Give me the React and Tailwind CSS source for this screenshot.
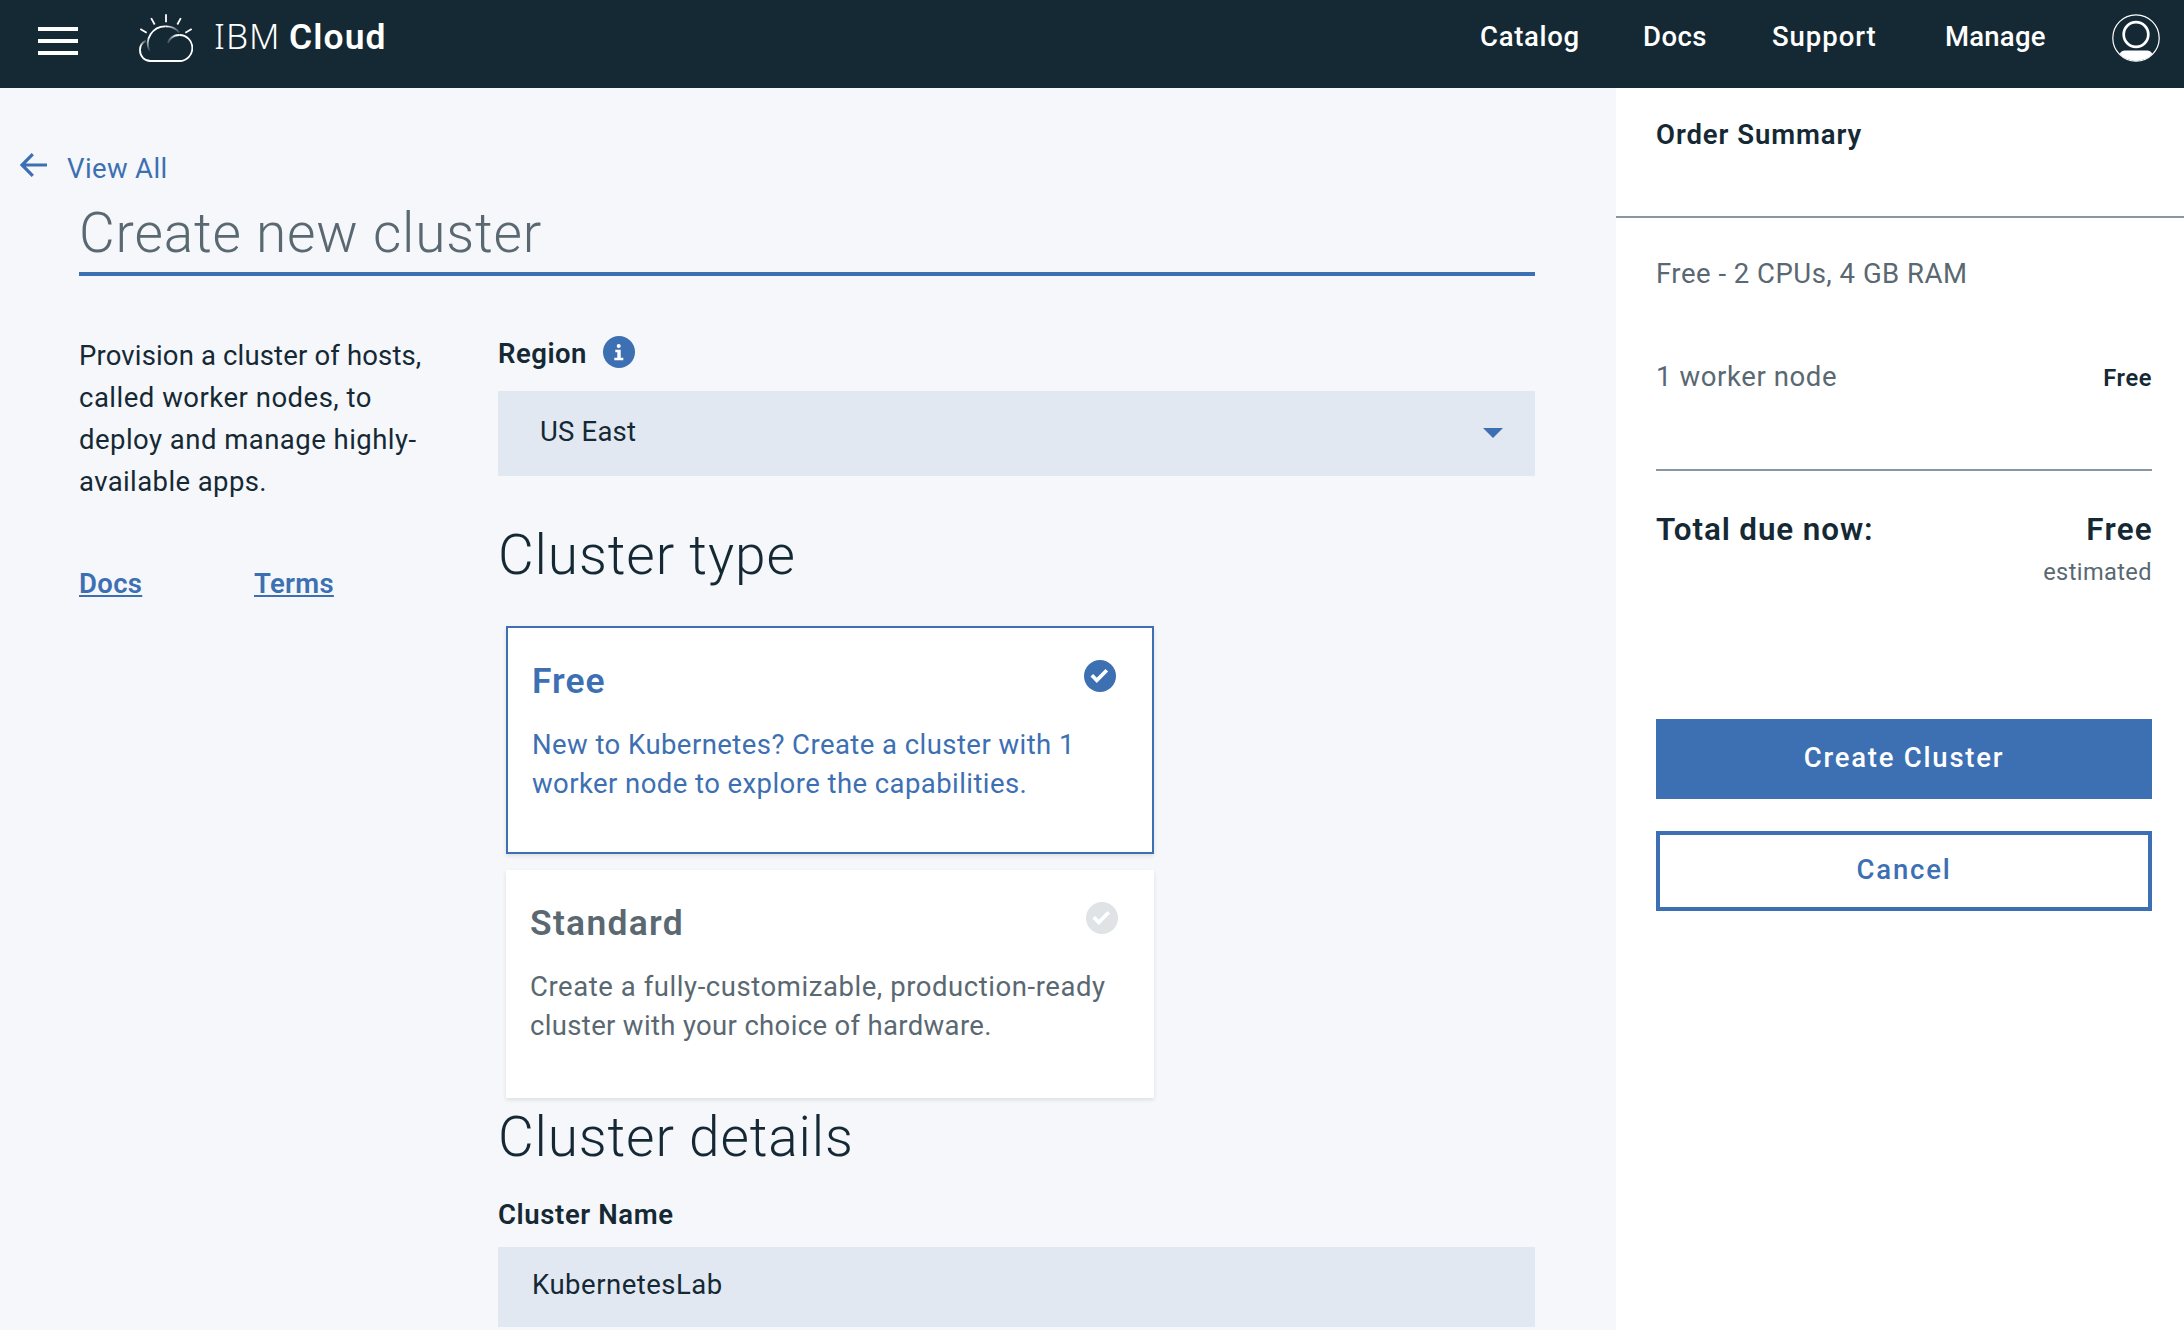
function CloudLogo() {
  return (
    <svg className="h-12 w-[54px] shrink-0" viewBox="417 42 162 144" fill="none" stroke="#fff" strokeWidth="5.4">
      <defs>
        <linearGradient id="sunLeft" gradientUnits="userSpaceOnUse" x1="0" y1="156" x2="0" y2="112">
          <stop offset="0" stopColor="#fff" stopOpacity="0" />
          <stop offset="1" stopColor="#fff" />
        </linearGradient>
        <linearGradient id="sunRight" gradientUnits="userSpaceOnUse" x1="500" y1="0" x2="540" y2="0">
          <stop offset="0" stopColor="#fff" />
          <stop offset="1" stopColor="#fff" stopOpacity="0.1" />
        </linearGradient>
        <linearGradient id="puffLeft" gradientUnits="userSpaceOnUse" x1="420" y1="140" x2="440" y2="120">
          <stop offset="0" stopColor="#fff" />
          <stop offset="1" stopColor="#fff" stopOpacity="0.1" />
        </linearGradient>
        <linearGradient id="puffRight" gradientUnits="userSpaceOnUse" x1="500" y1="0" x2="530" y2="0">
          <stop offset="0" stopColor="#fff" stopOpacity="0.05" />
          <stop offset="1" stopColor="#fff" />
        </linearGradient>
      </defs>
      <path d="M498 43v24M453.500 54.500l10.500 19M542.500 54.500L532 73.500M421 87l19 11M575 87l-19 11" />
      <path d="M449 154A52 52 0 0 1 497 79" stroke="url(#sunLeft)" />
      <path d="M497 79A52 52 0 0 1 538 97" stroke="url(#sunRight)" />
      <path d="M438 122A32 32 0 0 0 420 152" stroke="url(#puffLeft)" />
      <path d="M503 129A38 38 0 0 1 538 105" stroke="url(#puffRight)" />
      <path d="M420 151C420 168 433 183 451 183H539A38.500 39 0 0 0 538 105" />
    </svg>
  );
}

function Avatar() {
  return (
    <svg className="h-12 w-12 shrink-0" viewBox="0 0 48 48" fill="none" stroke="#fff">
      <circle cx="24" cy="24" r="23.200" strokeWidth="1.200" />
      <circle cx="24" cy="20.500" r="12.300" strokeWidth="2.700" />
      <path d="M7.500 40C9 37.500 10.500 36.400 13 36.400H35C37.500 36.400 39 37.500 40.500 40A23.200 23.200 0 0 1 7.500 40Z" fill="#fff" stroke="none" />
    </svg>
  );
}

function CheckBadge({ className }) {
  return (
    <svg className={`mt-px h-8 w-8 shrink-0 ${className}`} viewBox="0 0 32 32">
      <circle cx="16" cy="16" r="16" fill="currentColor" />
      <path d="M7.800 15.300L12.800 20.300L22.800 10.300" fill="none" stroke="#fff" strokeWidth="3.700" />
    </svg>
  );
}

function Header() {
  return (
    <header className="flex h-[88px] shrink-0 items-start bg-[#152935] pl-[38px] text-white">
      <div className="mt-[27px] flex w-10 flex-col gap-2">
        <div className="h-1 bg-white" />
        <div className="h-1 bg-white" />
        <div className="h-1 bg-white" />
      </div>
      <div className="mt-3.5 ml-[61px]">
        <CloudLogo />
      </div>
      <div className="mt-3.5 ml-[21px] flex w-[1266px] items-baseline text-[35.4px] leading-[44px]">
        <span className="w-[75px] font-['Noto_Sans',sans-serif] text-[35px] font-light tracking-[1px]">IBM</span>
        <span className="font-semibold tracking-[1.1px]">Cloud</span>
      </div>
      <nav className="mt-[17px] flex text-[27.5px] leading-10 font-medium">
        <a className="w-[163px] tracking-[0.7px]">Catalog</a>
        <a className="w-[129px] tracking-[0.43px]">Docs</a>
        <a className="w-[173px] tracking-[0.96px]">Support</a>
        <a className="w-[167px] tracking-[0.22px]">Manage</a>
      </nav>
      <div className="mt-3.5">
        <Avatar />
      </div>
    </header>
  );
}

function Intro() {
  return (
    <section className="w-[419px] pt-[59px]">
      <p className="leading-[42px]">
        <span className="block tracking-[0.15px]">Provision a cluster of hosts,</span>
        <span className="block tracking-[0.5px]">called worker nodes, to</span>
        <span className="block tracking-[0.47px]">deploy and manage highly-</span>
        <span className="block tracking-[0.4px]">available apps.</span>
      </p>
      <div className="mt-[61px] flex font-semibold text-[#3d70b2]">
        <div className="w-[175px]">
          <a className="tracking-[0.33px] underline decoration-2 underline-offset-2 [text-decoration-skip-ink:none]">Docs</a>
        </div>
        <a className="tracking-[0.3px] underline decoration-2 underline-offset-2 [text-decoration-skip-ink:none]">Terms</a>
      </div>
    </section>
  );
}

function ClusterForm() {
  return (
    <section className="w-[1037px] pt-[58px]">
      <div className="flex">
        <label className="w-[105px] font-semibold tracking-[0.5px]">Region</label>
        <svg className="mt-0.5 h-8 w-8" viewBox="0 0 32 32">
          <circle cx="16" cy="16" r="16" fill="#3d70b2" />
          <circle cx="15.700" cy="10" r="2" fill="#fff" />
          <path d="M12.300 13.800H17.700V21.800H20.300V24.300H11.300V21.800H14.300V16.300H12.300Z" fill="#fff" />
        </svg>
      </div>
      <div className="mt-[17px] flex h-[85px] justify-between bg-[#e1e8f2] pt-[21px] pr-8 pl-[42px]">
        <span className="tracking-[0.21px]">US East</span>
        <svg className="mt-4 h-2.5 w-5" viewBox="0 0 20 10">
          <path d="M0 0H20L10 10Z" fill="#3d70b2" />
        </svg>
      </div>

      <h2 className="mt-[43px] text-[55px] leading-[72px] font-light tracking-[0.89px]">Cluster type</h2>
      <div className="mt-[35px] ml-2 flex w-[648px] flex-col gap-4">
        <div className="flex h-[228px] justify-between border-2 border-[#3d70b2] bg-white pt-[31px] pr-9 pl-6 text-[#3d70b2] shadow-[0_2px_4px_rgba(0,0,0,0.1)]">
          <div className="w-[548px]">
            <h3 className="text-[35.4px] leading-[44px] font-semibold tracking-[1px]">Free</h3>
            <p className="mt-[22px] leading-[39px] whitespace-nowrap">
              <span className="block tracking-[0.44px]">New to Kubernetes? Create a cluster with 1</span>
              <span className="block tracking-[0.43px]">worker node to explore the capabilities.</span>
            </p>
          </div>
          <CheckBadge className="text-[#3d70b2]" />
        </div>
        <div className="flex h-[228px] justify-between bg-white pt-[31px] pr-9 pl-6 text-[#5a6872] shadow-[0_2px_4px_rgba(0,0,0,0.1)]">
          <div className="w-[548px]">
            <h3 className="text-[35.4px] leading-[44px] font-semibold tracking-[1.3px]">Standard</h3>
            <p className="mt-[22px] leading-[39px] whitespace-nowrap">
              <span className="block tracking-[0.56px]">Create a fully-customizable, production-ready</span>
              <span className="block tracking-[0.34px]">cluster with your choice of hardware.</span>
            </p>
          </div>
          <CheckBadge className="text-[#dfe3e6]" />
        </div>
      </div>

      <h2 className="mt-[3px] text-[55px] leading-[72px] font-light tracking-[0.85px]">Cluster details</h2>
      <label className="mt-[22px] block font-semibold tracking-[0.61px]">Cluster Name</label>
      <div className="mt-3 h-20 bg-[#e1e8f2] pt-[18px] pl-[34px] tracking-[0.5px]">KubernetesLab</div>
    </section>
  );
}

function OrderSummary() {
  return (
    <aside className="w-[568px] bg-white pt-[27px]">
      <h2 className="px-10 font-semibold tracking-[0.93px]">Order Summary</h2>
      <div className="mt-[61px] h-0.5 bg-[#8897a2]" />
      <div className="pt-9 pr-8 pl-10">
        <p className="tracking-[0.5px] text-[#5a6872]">Free - 2 CPUs, 4 GB RAM</p>
        <div className="mt-[63px] flex h-10 items-baseline justify-between">
          <span className="tracking-[0.6px] text-[#5a6872]">1 worker node</span>
          <span className="text-[23.6px] font-semibold tracking-[0.6px]">Free</span>
        </div>
        <div className="mt-[72px] h-0.5 bg-[#8897a2]" />
        <div className="mt-[37px] flex justify-between text-[31.4px] leading-[44px] font-semibold">
          <span className="tracking-[0.89px]">Total due now:</span>
          <span className="-mr-px tracking-[1.25px]">Free</span>
        </div>
        <p className="mt-1 text-right text-[23.6px] leading-8 tracking-[0.4px] text-[#5a6872]">estimated</p>
        <button className="mt-[131px] flex h-20 w-full justify-center bg-[#3d70b2] pt-[19px] font-medium tracking-[1.77px] text-white">
          Create Cluster
        </button>
        <button className="mt-8 flex h-20 w-full justify-center border-4 border-[#3d70b2] bg-white pt-[15px] font-medium tracking-[1.8px] text-[#3d70b2]">
          Cancel
        </button>
      </div>
    </aside>
  );
}

export default function App() {
  return (
    <div className="flex h-[1330px] w-[2184px] flex-col overflow-hidden bg-white font-['Roboto',sans-serif] text-[27.5px] leading-10 text-[#152935]">
      <Header />
      <div className="flex flex-1">
        <main className="w-[1616px] bg-[#f5f7fb] pt-[61px]">
          <a className="flex pl-5 text-[#3d70b2]">
            <svg className="mt-1 mr-5 h-6 w-[27px]" viewBox="0 0 27 24" fill="none" stroke="#3d70b2" strokeWidth="3.200">
              <path d="M27 12H2M12.800 1.200L2 12L12.800 22.800" />
            </svg>
            <span className="tracking-[0.37px]">View All</span>
          </a>
          <h1 className="mt-2 ml-[79px] w-[1456px] border-b-4 border-[#3d70b2] pb-[3px] text-[55px] leading-[72px] font-[350] tracking-[0.83px] text-[#5a6872]">
            Create new cluster
          </h1>
          <div className="ml-[79px] flex">
            <Intro />
            <ClusterForm />
          </div>
        </main>
        <OrderSummary />
      </div>
    </div>
  );
}
